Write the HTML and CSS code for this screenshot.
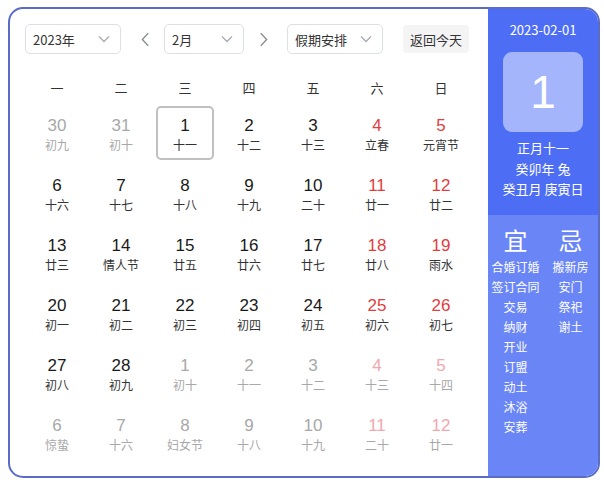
FILE: index.html
```html
<!DOCTYPE html>
<html lang="zh">
<head>
<meta charset="utf-8">
<link rel="stylesheet" href="styles.css">
</head>
<body>
<div class="cal">
  <div class="main">
    <div class="toolbar">
      <div class="select sel-year"><span>2023年</span><svg class="chev" viewBox="0 0 12 8"><polyline points="1,1.5 6,6.5 11,1.5"/></svg></div>
      <div class="arrow arrow-prev"><svg viewBox="0 0 10 16"><polyline points="8,1 1.5,8 8,15"/></svg></div>
      <div class="select sel-month"><span>2月</span><svg class="chev" viewBox="0 0 12 8"><polyline points="1,1.5 6,6.5 11,1.5"/></svg></div>
      <div class="arrow arrow-next"><svg viewBox="0 0 10 16"><polyline points="2,1 8.5,8 2,15"/></svg></div>
      <div class="select sel-holiday"><span>假期安排</span><svg class="chev" viewBox="0 0 12 8"><polyline points="1,1.5 6,6.5 11,1.5"/></svg></div>
      <div class="today-btn">返回今天</div>
    </div>
    <div class="weekdays">
      <div>一</div><div>二</div><div>三</div><div>四</div><div>五</div><div>六</div><div>日</div>
    </div>
    <div class="days">
      <div class="day other"><b>30</b><i>初九</i></div>
      <div class="day other"><b>31</b><i>初十</i></div>
      <div class="day current"><b>1</b><i>十一</i></div>
      <div class="day"><b>2</b><i>十二</i></div>
      <div class="day"><b>3</b><i>十三</i></div>
      <div class="day wk"><b>4</b><i>立春</i></div>
      <div class="day wk"><b>5</b><i>元宵节</i></div>

      <div class="day"><b>6</b><i>十六</i></div>
      <div class="day"><b>7</b><i>十七</i></div>
      <div class="day"><b>8</b><i>十八</i></div>
      <div class="day"><b>9</b><i>十九</i></div>
      <div class="day"><b>10</b><i>二十</i></div>
      <div class="day wk"><b>11</b><i>廿一</i></div>
      <div class="day wk"><b>12</b><i>廿二</i></div>

      <div class="day"><b>13</b><i>廿三</i></div>
      <div class="day"><b>14</b><i>情人节</i></div>
      <div class="day"><b>15</b><i>廿五</i></div>
      <div class="day"><b>16</b><i>廿六</i></div>
      <div class="day"><b>17</b><i>廿七</i></div>
      <div class="day wk"><b>18</b><i>廿八</i></div>
      <div class="day wk"><b>19</b><i>雨水</i></div>

      <div class="day"><b>20</b><i>初一</i></div>
      <div class="day"><b>21</b><i>初二</i></div>
      <div class="day"><b>22</b><i>初三</i></div>
      <div class="day"><b>23</b><i>初四</i></div>
      <div class="day"><b>24</b><i>初五</i></div>
      <div class="day wk"><b>25</b><i>初六</i></div>
      <div class="day wk"><b>26</b><i>初七</i></div>

      <div class="day"><b>27</b><i>初八</i></div>
      <div class="day"><b>28</b><i>初九</i></div>
      <div class="day other"><b>1</b><i>初十</i></div>
      <div class="day other"><b>2</b><i>十一</i></div>
      <div class="day other"><b>3</b><i>十二</i></div>
      <div class="day other wk"><b>4</b><i>十三</i></div>
      <div class="day other wk"><b>5</b><i>十四</i></div>

      <div class="day other"><b>6</b><i>惊蛰</i></div>
      <div class="day other"><b>7</b><i>十六</i></div>
      <div class="day other"><b>8</b><i>妇女节</i></div>
      <div class="day other"><b>9</b><i>十八</i></div>
      <div class="day other"><b>10</b><i>十九</i></div>
      <div class="day other wk"><b>11</b><i>二十</i></div>
      <div class="day other wk"><b>12</b><i>廿一</i></div>
    </div>
  </div>
  <div class="side">
    <div class="side-top">
      <div class="side-date">2023-02-01</div>
      <div class="big-day">1</div>
      <div class="lunar-info">
        <div>正月十一</div>
        <div>癸卯年 兔</div>
        <div>癸丑月 庚寅日</div>
      </div>
    </div>
    <div class="side-bottom">
      <div class="col">
        <div class="col-title">宜</div>
        <div>合婚订婚</div>
        <div>签订合同</div>
        <div>交易</div>
        <div>纳财</div>
        <div>开业</div>
        <div>订盟</div>
        <div>动土</div>
        <div>沐浴</div>
        <div>安葬</div>
      </div>
      <div class="col">
        <div class="col-title">忌</div>
        <div>搬新房</div>
        <div>安门</div>
        <div>祭祀</div>
        <div>谢土</div>
      </div>
    </div>
  </div>
</div>
</body>
</html>
```
FILE: styles.css
```css
* { box-sizing: border-box; }
html, body { margin: 0; padding: 0; }
body {
  background: #fff;
  font-family: "Noto Sans CJK SC", "Liberation Sans", sans-serif;
  color: #222;
  padding: 7px 0 0 8px;
}
.cal {
  width: 592px;
  height: 471px;
  border: 2px solid #5a6cc6;
  border-radius: 15px;
  overflow: hidden;
  display: flex;
  background: #fff;
}
.main {
  flex: 1;
  padding: 15px 0 0 15px;
}
.toolbar {
  display: flex;
  align-items: center;
  height: 30px;
}
.select {
  height: 30px;
  border: 1px solid #dcdfe6;
  border-radius: 5px;
  display: flex;
  align-items: center;
  justify-content: space-between;
  padding: 0 10px 0 7px;
  font-size: 13px;
  color: #333;
}
.sel-year { width: 96px; }
.sel-month { width: 80px; }
.sel-holiday { width: 96px; }
.chev {
  width: 12px;
  height: 8px;
  fill: none;
  stroke: #a8abb2;
  stroke-width: 1.3;
}
.arrow {
  width: 16px;
  height: 30px;
  display: flex;
  align-items: center;
  justify-content: center;
}
.arrow svg {
  width: 9px;
  height: 15px;
  fill: none;
  stroke: #8a8d94;
  stroke-width: 1.5;
}
.arrow-prev { margin: 0 11px 0 16px; }
.arrow-next { margin: 0 16px 0 11px; }
.today-btn {
  margin-left: 20px;
  height: 28px;
  padding: 0 7px;
  display: flex;
  align-items: center;
  background: #f4f4f5;
  border-radius: 4px;
  font-size: 13px;
  color: #333;
}
.weekdays {
  display: grid;
  grid-template-columns: repeat(7, 64px);
  margin-top: 17px;
  height: 32px;
  align-items: center;
  font-size: 13px;
  color: #333;
  text-align: center;
}
.days {
  display: grid;
  grid-template-columns: repeat(7, 64px);
  grid-auto-rows: 60px;
}
.day {
  display: flex;
  flex-direction: column;
  align-items: center;
  margin: 3px;
  border: 2px solid transparent;
  border-radius: 5px;
  padding-top: 8px;
}
.day b {
  font-weight: normal;
  font-family: "Liberation Sans", "Noto Sans CJK SC", sans-serif;
  font-size: 17px;
  line-height: 20px;
  color: #1a1a1a;
}
.day i {
  font-style: normal;
  font-size: 12px;
  line-height: 18px;
  color: #333;
}
.day.wk b { color: #e23d3d; }
.day.other b, .day.other i { color: #a8a8a8; }
.day.other.wk b { color: #f2a7ad; }
.day.current { border-color: #c0c0c0; }
.side {
  width: 110px;
  display: flex;
  flex-direction: column;
  color: #fff;
}
.side-top {
  background: #4d6ef4;
  padding: 11px 0 15px;
  display: flex;
  flex-direction: column;
  align-items: center;
}
.side-date {
  font-size: 13px;
  line-height: 20px;
}
.big-day {
  margin-top: 12px;
  width: 80px;
  height: 80px;
  border-radius: 9px;
  background: #a4b5fb;
  display: flex;
  align-items: center;
  justify-content: center;
  font-size: 46px;
  line-height: 1;
  font-family: "Liberation Sans", sans-serif;
}
.lunar-info {
  margin-top: 6px;
  font-size: 13px;
  line-height: 20.5px;
  text-align: center;
}
.side-bottom {
  flex: 1;
  background: #6a86f6;
  display: flex;
  padding-top: 7px;
}
.col {
  flex: 1;
  text-align: center;
  font-size: 12px;
  line-height: 20px;
}
.col-title {
  font-size: 24px;
  line-height: 35px;
}
```
